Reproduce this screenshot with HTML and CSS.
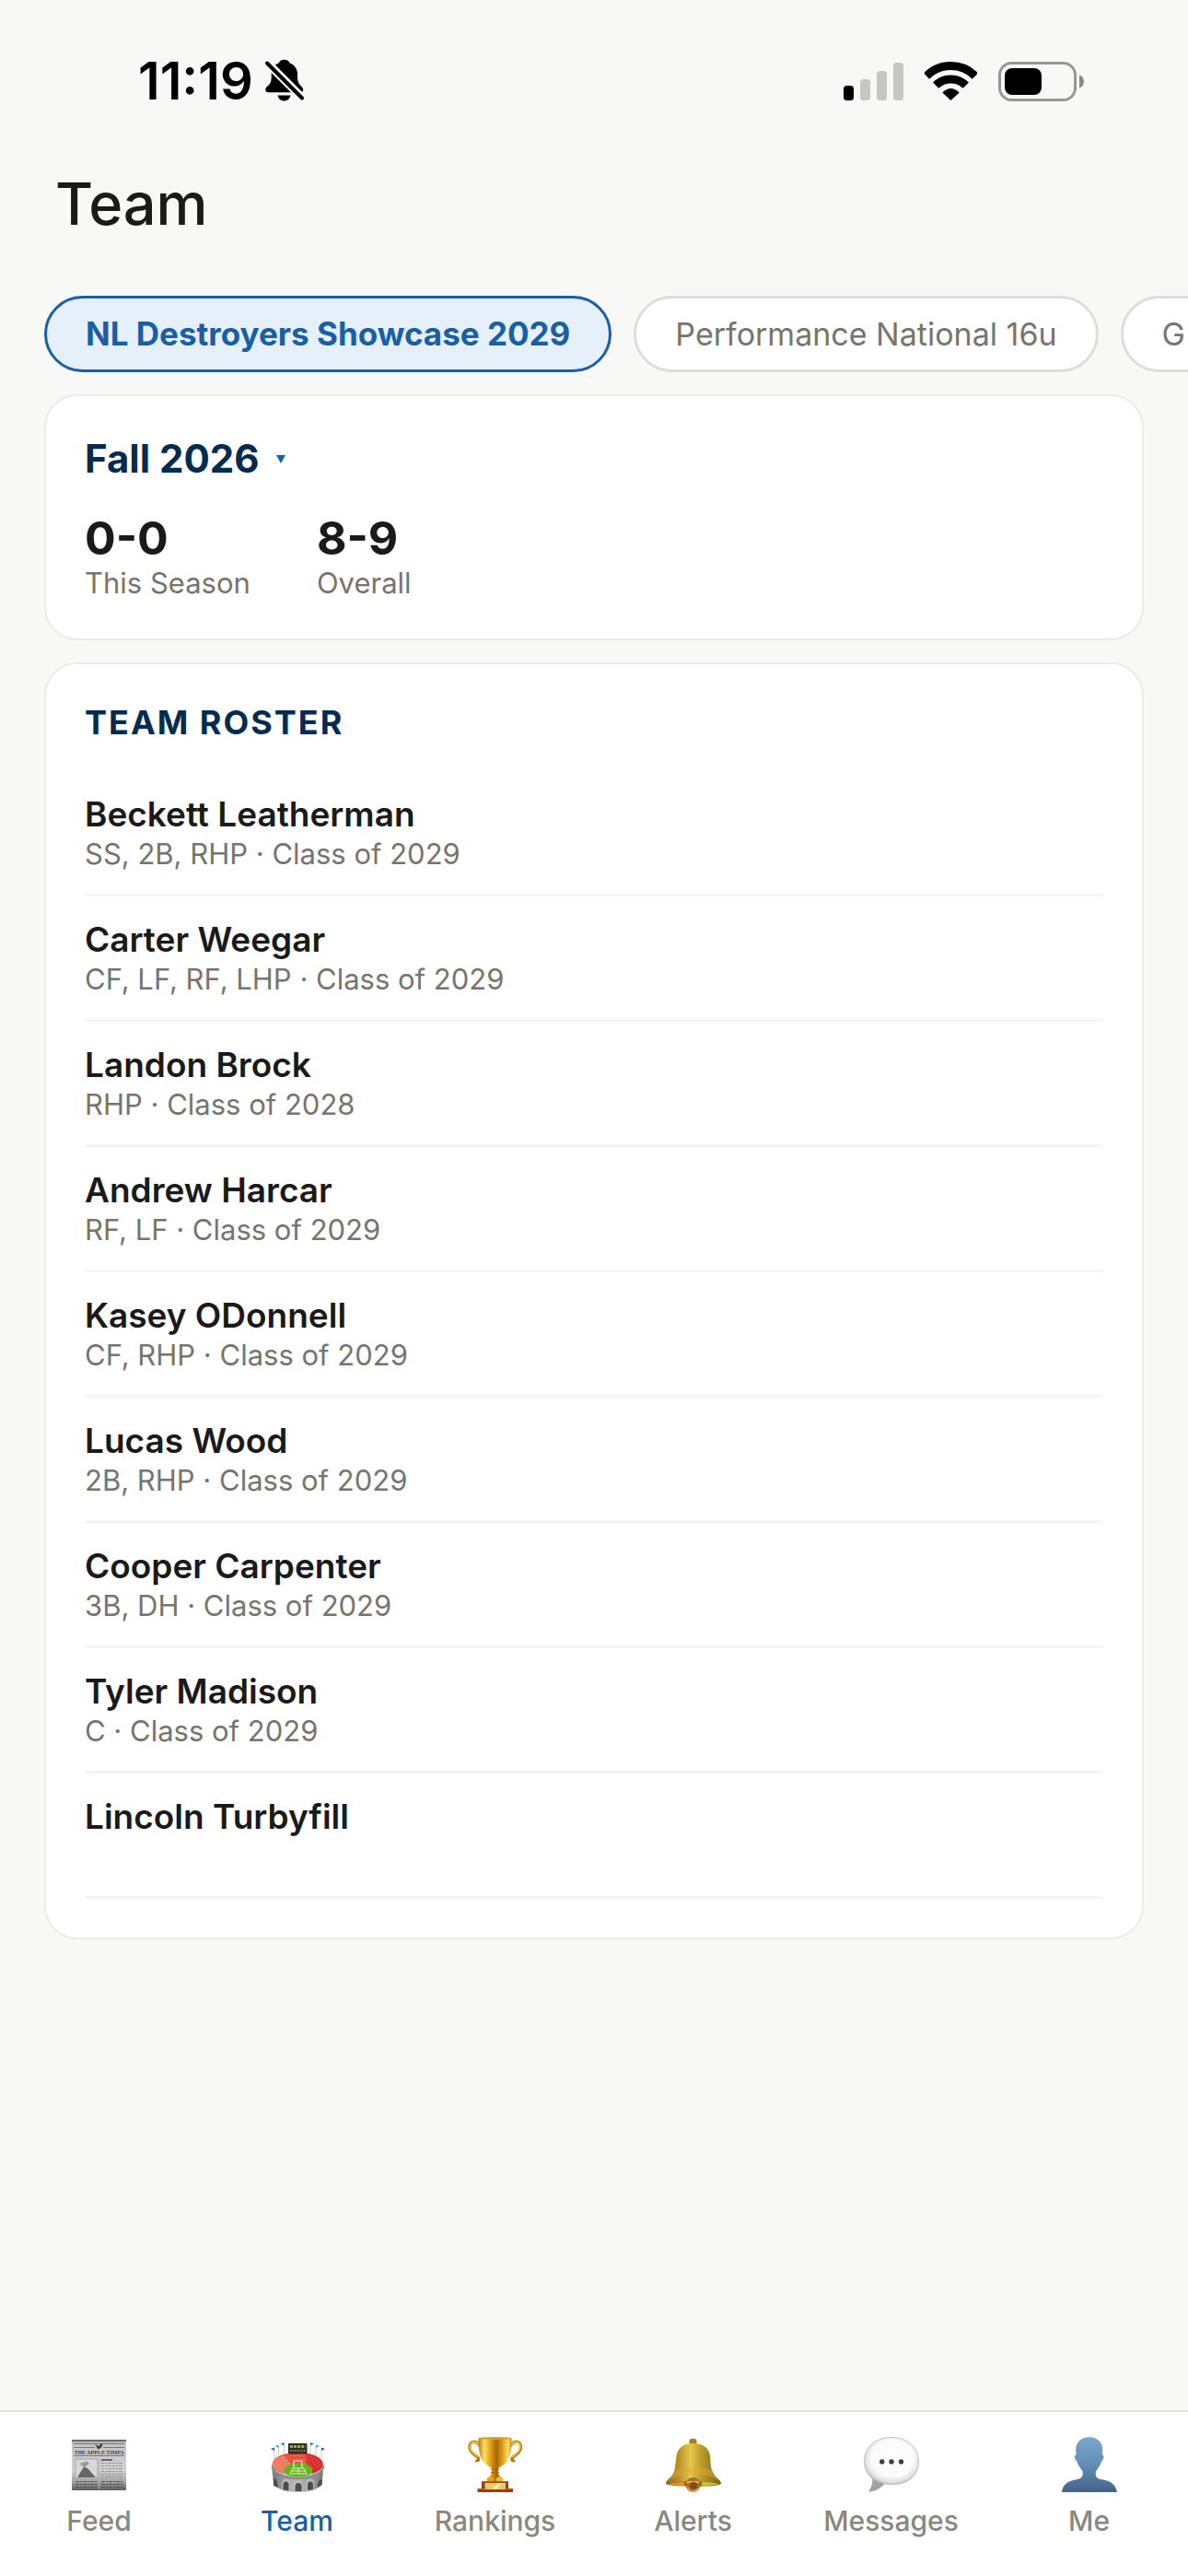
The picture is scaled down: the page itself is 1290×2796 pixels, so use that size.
FILE: index.html
```
<!DOCTYPE html>
<html lang="en">
<head>
    <meta charset="UTF-8">
    <meta name="viewport" content="width=device-width, initial-scale=1.0">
    <title>Team</title>
    <link rel="stylesheet" href="styles.css">
</head>
<body>
    <div class="status-bar">
        <div class="status-left">
            <span class="time">11:19</span>
            <svg width="44" height="48" viewBox="0 0 44 48" aria-hidden="true">
                <path d="M21.7 .7c-3 0-5 1.500-5.800 3.500C10.500 6.500 7.700 11 7.700 16v4c0 5-1.700 7.500-4.200 9.500C1.800 31 1.300 32 1.300 33.500c0 1.700 1 2.800 2.800 2.800H39.500c1.700 0 2.700-1.200 2.700-2.800 0-1.500-.8-2.500-2.200-4-2.500-2.300-4-5-4-9.500v-4c0-5-3-9.500-8.500-11.800C26.700 2.200 24.700.7 21.700.7z"/>
                <path d="M14.500 39.500h14c-.8 3.700-3.500 6-7 6s-6.200-2.300-7-6z"/>
                <path class="slash-gap" d="M1 2L43 44"/>
                <path class="slash" d="M3 4.500L41 42.500"/>
            </svg>
        </div>
        <div class="status-right">
            <svg width="65" height="42" viewBox="0 0 65 42" aria-hidden="true">
                <rect x="0" y="26" width="11" height="16" rx="3.500"/>
                <g fill="#c6c6c4">
                    <rect x="18" y="19" width="11" height="23" rx="3.500"/>
                    <rect x="36" y="10" width="11" height="32" rx="3.500"/>
                    <rect x="54" y="1" width="11" height="41" rx="3.500"/>
                </g>
            </svg>
            <svg width="57" height="42" viewBox="0 0 57 42" aria-hidden="true">
                <g fill="none" stroke="#000" stroke-width="9">
                    <path d="M2 15.500A37.500 37.500 0 0 1 55 15.500"/>
                    <path d="M12.200 25.700A23 23 0 0 1 44.800 25.700"/>
                </g>
                <path d="M28.500 42L19.300 33.500Q28.500 24.500 37.700 33.500z"/>
            </svg>
            <svg width="93" height="43" viewBox="0 0 93 43" aria-hidden="true">
                <rect x="1.500" y="1.500" width="82" height="40" rx="13" fill="none" stroke="#979795" stroke-width="3"/>
                <rect x="7" y="7" width="40" height="29" rx="8"/>
                <path d="M88 14.500c3.300 1 5 3.800 5 7s-1.700 6-5 7z" fill="#8a8a88"/>
            </svg>
        </div>
    </div>

    <header>
        <h1>Team</h1>
    </header>

    <main>
        <div class="team-pills">
            <button class="pill active" type="button">NL Destroyers Showcase 2029</button>
            <button class="pill" type="button">Performance National 16u</button>
            <button class="pill" type="button">G</button>
        </div>

        <section class="card">
            <div class="season">
                <select class="season-select" aria-label="Season">
                    <option>Fall 2026</option>
                </select>
                <span class="caret"></span>
            </div>
            <div class="stats">
                <div>
                    <div class="stat-value">0-0</div>
                    <div class="stat-label">This Season</div>
                </div>
                <div>
                    <div class="stat-value">8-9</div>
                    <div class="stat-label">Overall</div>
                </div>
            </div>
        </section>

        <section class="card">
            <h2>TEAM ROSTER</h2>
            <ul class="roster">
                <li>
                    <div class="name">Beckett Leatherman</div>
                    <div class="detail">SS, 2B, RHP · Class of 2029</div>
                </li>
                <li>
                    <div class="name">Carter Weegar</div>
                    <div class="detail">CF, LF, RF, LHP · Class of 2029</div>
                </li>
                <li>
                    <div class="name">Landon Brock</div>
                    <div class="detail">RHP · Class of 2028</div>
                </li>
                <li>
                    <div class="name">Andrew Harcar</div>
                    <div class="detail">RF, LF · Class of 2029</div>
                </li>
                <li>
                    <div class="name">Kasey ODonnell</div>
                    <div class="detail">CF, RHP · Class of 2029</div>
                </li>
                <li>
                    <div class="name">Lucas Wood</div>
                    <div class="detail">2B, RHP · Class of 2029</div>
                </li>
                <li>
                    <div class="name">Cooper Carpenter</div>
                    <div class="detail">3B, DH · Class of 2029</div>
                </li>
                <li>
                    <div class="name">Tyler Madison</div>
                    <div class="detail">C · Class of 2029</div>
                </li>
                <li>
                    <div class="name">Lincoln Turbyfill</div>
                    <div class="detail"></div>
                </li>
            </ul>
        </section>
    </main>

    <nav class="tab-bar">
        <a href="#feed">
            <!-- newspaper -->
            <svg width="60" height="60" viewBox="0 0 60 60" aria-hidden="true">
                <defs>
                    <linearGradient id="paper" x1="0" y1="0" x2="0" y2="1">
                        <stop offset="0" stop-color="#a8a8a8"/>
                        <stop offset=".1" stop-color="#c4c4c4"/>
                        <stop offset=".6" stop-color="#d2d2d2"/>
                        <stop offset=".82" stop-color="#a5a5a5"/>
                        <stop offset="1" stop-color="#5c5c5c"/>
                    </linearGradient>
                </defs>
                <rect x="0" y="3" width="59" height="55" rx="1" fill="url(#paper)"/>
                <path d="M0 4H59" stroke="#555" stroke-width="1.500"/>
                <path d="M2 7.500H57M2 11.500H25M34 11.500H57M2 20.500H57" stroke="#777" stroke-width="1"/>
                <path d="M25 8l4 2 3-2.500 1.500 1-2 3.500-3 1.500z" fill="#3c3c3c"/>
                <text class="masthead" x="29.500" y="18.700">THE APPLE TIMES</text>
                <rect x="4" y="24" width="24" height="21" fill="#d8d8d8" stroke="#999" stroke-width=".8"/>
                <path d="M6 44l6-10 2-1 3 1 9 10z" fill="#666"/>
                <path d="M8 30c2-3 4-1 6-3 3-1 4 1 5 2-2 2-4 1-4 4h-3c0-3-2-2-4-3z" fill="#999"/>
                <path d="M32 25H44" stroke="#444" stroke-width="1.500"/>
                <path d="M32 28.500H56M32 31.500H56M32 34.500H56M32 37.500H56M32 40.500H56M32 43.500H56" stroke="#999" stroke-width="1" stroke-dasharray="3 1 2 1 4 1"/>
                <path d="M4 48.500H27M32 48.500H56M4 51.500H27M32 51.500H56M4 54.500H27M32 54.500H56" stroke="#555" stroke-width="1.200" stroke-dasharray="4 1 2 1"/>
                <path d="M29.800 23V57" stroke="#b8b8b8" stroke-width=".8"/>
            </svg>
            <span>Feed</span>
        </a>
        <a href="#team" class="current" aria-current="page">
            <!-- stadium -->
            <svg width="60" height="60" viewBox="0 0 60 60" aria-hidden="true">
                <defs>
                    <linearGradient id="wall" x1="0" y1="0" x2="1" y2="0">
                        <stop offset="0" stop-color="#777"/>
                        <stop offset=".4" stop-color="#b4b4b4"/>
                        <stop offset=".7" stop-color="#a5a5a5"/>
                        <stop offset="1" stop-color="#777"/>
                    </linearGradient>
                </defs>
                <path d="M5 24V13M9.500 20V10M15.500 18V7M56 24V13M50 20V10M44 18V7" stroke="#bbb" stroke-width=".8"/>
                <path d="M5 11.500v3.500l-4-2zM56 11.500v3.500l4-2z" fill="#2756b8"/>
                <path d="M9.500 8.500v3.500l-4-2zM50 8.500v3.500l4-2z" fill="#32b5ad"/>
                <path d="M15.500 6v3.500l-4-2zM44 6v3.500l4-2z" fill="#2d7dc4"/>
                <path d="M2 30L4 52C9 57 19 60 31 60S52 57 56.500 52L58.500 30z" fill="url(#wall)"/>
                <ellipse cx="30.300" cy="31" rx="28.300" ry="14" fill="#bdbdbd"/>
                <path d="M3 30C3 22 15 17 30.500 17S57.500 22 57.500 30C57.500 35 50 39 46 39.500C45 32 39 30 31 30S16 33 15 39.500C9 38 3 35 3 30z" fill="#e94c3d"/>
                <path d="M39 18C50 20 57.500 24 57.500 30C57.500 35 50 39 46 39.500C45 35 43 33 40 31z" fill="#df2a2d"/>
                <path d="M15 20l9 11-9 8C8 37 3 35 3 30S8 22 15 20z" fill="#f47960"/>
                <g fill="none" stroke="#ffc2ae" stroke-width="1" stroke-dasharray="1 2.500" opacity=".8">
                    <path d="M6 31C6 24 18 20 30 20S54 24 54 31"/>
                    <path d="M9 34C9 27 19 24 30 24S51 27 51 34"/>
                    <path d="M13 36C14 30 22 27 30 27S46 30 47 36"/>
                </g>
                <ellipse cx="30.700" cy="36" rx="15.500" ry="7.500" fill="#62b81b"/>
                <path d="M22 40l3-6h12l3 6zM24 37h14M31 34v6" fill="none" stroke="#dff2c8" stroke-width="1"/>
                <path d="M26 33v-7h9v7" fill="none" stroke="#ffe3dc" stroke-width="1.200"/>
                <path d="M2.500 32C4 40 17 45 30.500 45S57 40 58.500 32" fill="none" stroke="#8a8a8a" stroke-width="2"/>
                <g fill="#d0d0d0">
                    <path d="M13 59V50a4.500 4.500 0 0 1 9 0V60zM26 60V52a4.800 4.800 0 0 1 9.600 0V60zM39.500 59V50a4.500 4.500 0 0 1 9 0V57z" opacity=".5"/>
                </g>
                <path d="M4 53V45c4 0 4.500 4 4.500 10zM14.500 57.500V52a3 3.500 0 0 1 6 0V58.500zM27.500 59V54a3.500 4 0 0 1 7 0V59zM41 58V52a3 3.500 0 0 1 6 0V57zM52 55c0-6 1-9 5-9l-.5 6z" fill="#4d4d4d"/>
                <rect x="20" y="7" width="20.500" height="11.500" rx="1" fill="#2c2f27"/>
                <path d="M22 10.500H38.500" stroke="#a3a93e" stroke-width="3" stroke-dasharray="3 1"/>
                <path d="M22 15H38.500" stroke="#7f8532" stroke-width="2" stroke-dasharray="1.500 1"/>
            </svg>
            <span>Team</span>
        </a>
        <a href="#rankings">
            <!-- trophy -->
            <svg width="60" height="60" viewBox="0 0 60 60" aria-hidden="true">
                <defs>
                    <linearGradient id="gold" x1="0" y1="0" x2="1" y2="0">
                        <stop offset="0" stop-color="#b87a0c"/>
                        <stop offset=".18" stop-color="#ffdf6b"/>
                        <stop offset=".36" stop-color="#e3a012"/>
                        <stop offset=".55" stop-color="#a76605"/>
                        <stop offset=".8" stop-color="#f3b929"/>
                        <stop offset=".9" stop-color="#ffe27d"/>
                        <stop offset="1" stop-color="#c2850e"/>
                    </linearGradient>
                </defs>
                <g fill="none" stroke-linecap="round">
                    <path d="M12.500 9C9 3.500 2 4.500 2 11c0 6 5 8 8.500 11 2 2 1.500 4-1 4M47 9c3.500-5.500 10.500-4.500 10.500 2 0 6-5 8-8.500 11-2 2-1.500 4 1 4" stroke="#b67a0c" stroke-width="3.200"/>
                    <path d="M12 8.500C9 4 2.500 5 2.500 11c0 5 5 7.500 8 10.500M47.500 8.500C50.500 4 57 5 57 11c0 5-5 7.500-8 10.500" stroke="#ffd75d" stroke-width="1.200"/>
                </g>
                <path d="M11.500 1H47.500C47.500 14 46 23 42 27c-3 4-7 5-9 7 0 4 0 6 2 9l3 2v4H21v-4l3-2c2-3 2-5 2-9-2-2-6-3-9-7C13 23 11.500 14 11.500 1z" fill="url(#gold)"/>
                <ellipse cx="29.500" cy="1.500" rx="18" ry="1.500" fill="#dc9f20"/>
                <path d="M24.500 35H34.500M25 38.500H34" stroke="#a2690a" stroke-width="1"/>
                <ellipse cx="24.500" cy="46" rx="4" ry="2.500" fill="#e0a324"/>
                <ellipse cx="34.500" cy="46" rx="4" ry="2.500" fill="#f0bb3c"/>
                <path d="M15 48H44V56H49V60H10.500V56H15z" fill="#9b3d0b"/>
                <path d="M15 48H44V49.500H15zM10.500 56H49V57.200H10.500z" fill="#c15c1c"/>
                <rect x="18.500" y="50" width="22.500" height="7" fill="#efc56d"/>
                <path d="M26 57l7-7h5l-7 7z" fill="#ffe9a8"/>
            </svg>
            <span>Rankings</span>
        </a>
        <a href="#alerts">
            <!-- bell -->
            <svg width="60" height="60" viewBox="0 0 60 60" aria-hidden="true">
                <defs>
                    <linearGradient id="brass" x1="0" y1="0" x2="1" y2="0">
                        <stop offset="0" stop-color="#8b6a14"/>
                        <stop offset=".25" stop-color="#c0942a"/>
                        <stop offset=".45" stop-color="#e6cb48"/>
                        <stop offset=".62" stop-color="#c0a02c"/>
                        <stop offset=".85" stop-color="#947920"/>
                        <stop offset="1" stop-color="#7d6416"/>
                    </linearGradient>
                </defs>
                <rect x="25.500" y="2" width="8" height="7" rx="2.500" fill="#a57f1c"/>
                <path d="M0 51C0 46 7 45 9.500 36C11 28 10.500 25 12 18C14.500 10 22 7 29.500 7S45 10 47.500 18C49 25 48 30 50 36C53 45 60 46 60 51C55 55 5 55 0 51z" fill="url(#brass)"/>
                <path d="M10 36C20 32 39 32 50 36C52 41 55 44 57 47C42 39 18 39 3 47C6 44 9 41 10 36z" fill="#e0a934" opacity=".45"/>
                <path d="M1 51C12 47 48 47 59 51C50 54 10 54 1 51z" fill="#8e6414"/>
                <path d="M3 51C8 49.500 14 49 20 48.500V53C14 53 7 52.500 3 51z" fill="#d59537"/>
                <path d="M39 48.500C46 49 52 49.500 57 51C51 52.500 45 53 39 53z" fill="#cfc02e"/>
                <circle cx="29.500" cy="52" r="8" fill="#a8712a"/>
                <path d="M22 50H37a8 8 0 0 0-1.500-2H23.500z" fill="#f2a94e"/>
                <circle cx="30" cy="53" r="4" fill="#7c4c1a"/>
                <path d="M23.500 55a7 7 0 0 0 12 1" fill="none" stroke="#dca75d" stroke-width="1.500"/>
            </svg>
            <span>Alerts</span>
        </a>
        <a href="#messages">
            <!-- speech bubble -->
            <svg width="60" height="60" viewBox="0 0 60 60" aria-hidden="true">
                <defs>
                    <radialGradient id="bubble" cx=".52" cy=".45" r=".58">
                        <stop offset="0" stop-color="#fff"/>
                        <stop offset=".68" stop-color="#fafafa"/>
                        <stop offset=".88" stop-color="#dedede"/>
                        <stop offset="1" stop-color="#adadad"/>
                    </radialGradient>
                </defs>
                <path d="M9 44c1 6-.5 10-4 15.500C12 60 18 56 22.500 51z" fill="#a2a2a2"/>
                <path d="M30 .5C48 .5 59.500 12 59.500 27S48 51.500 31 51.500C12 51.500 .5 41 .5 26.500S12 .5 30 .5z" fill="url(#bubble)" stroke="#b5b5b5" stroke-width=".8"/>
                <g fill="#3c3c3c">
                    <circle cx="19.700" cy="27" r="2.700"/>
                    <circle cx="30" cy="27" r="2.700"/>
                    <circle cx="40.500" cy="27" r="2.700"/>
                </g>
            </svg>
            <span>Messages</span>
        </a>
        <a href="#me">
            <!-- silhouette -->
            <svg width="60" height="60" viewBox="0 0 60 60" aria-hidden="true">
                <defs>
                    <linearGradient id="bust" x1="0" y1="0" x2="0" y2="1">
                        <stop offset="0" stop-color="#7ba7cb"/>
                        <stop offset=".45" stop-color="#6690b8"/>
                        <stop offset="1" stop-color="#446389"/>
                    </linearGradient>
                </defs>
                <path d="M29.700 .3C38.500 .3 44.200 6 44.200 14C44.200 16.500 44 18 44 19.500C46.500 20 45.500 25 43.200 26.500C41.500 31.500 39 34.500 36.800 37.500C36.500 42 37 44.500 42 46C49 47.500 58 48.500 60 60H0C1.500 48.500 10.500 47.500 17.500 46C22.500 44.500 23 42 22.700 37.500C20.500 34.500 18 31.500 16.300 26.500C14 25 13 20 15.500 19.500C15.500 18 15.200 16.500 15.200 14C15.200 6 21 .3 29.700 .3z" fill="url(#bust)"/>
            </svg>
            <span>Me</span>
        </a>
    </nav>
</body>
</html>
```
FILE: styles.css
```
* {
    margin: 0;
    padding: 0;
    box-sizing: border-box;
}

body {
    min-height: 100vh;
    display: flex;
    flex-direction: column;
    background: #f8f8f6;
    color: #1a1a1a;
    font-family: Inter, "Liberation Sans", sans-serif;
    overflow-x: hidden;
}

button, select {
    font-family: inherit;
    cursor: pointer;
}

/* status bar */
.status-bar {
    display: flex;
    align-items: center;
    justify-content: space-between;
    height: 176px;
    padding: 0 113px 0 150px;
    color: #000;
}

.status-left {
    display: flex;
    align-items: center;
    gap: 12px;
}

.status-right {
    display: flex;
    align-items: center;
    gap: 23px;
}

.time {
    font-size: 56px;
    font-weight: 600;
}

.slash-gap {
    stroke: #f8f8f6;
    stroke-width: 9;
}

.slash {
    stroke: #000;
    stroke-width: 4;
    stroke-linecap: round;
}

/* title */
header {
    padding: 5px 60px 60px;
}

h1 {
    font-size: 63px;
    line-height: 80px;
    font-weight: 500;
}

main {
    flex: 1;
    display: flex;
    flex-direction: column;
    gap: 24px;
    padding: 0 48px 48px;
}

/* team picker, scrolls off to the right */
.team-pills {
    display: flex;
    gap: 24px;
    margin-right: -48px;
    overflow: hidden;
}

.pill {
    flex: none;
    padding: 18px 42px;
    border: 3px solid #dddddd;
    border-radius: 42px;
    background: #fff;
    color: #75756d;
    font-size: 34px;
    line-height: 41px;
}

.pill.active {
    border-color: #185fa5;
    background: #e6f0fa;
    color: #185fa5;
    font-size: 35px;
    font-weight: 700;
}

.card {
    padding: 42px;
    border: 2px solid #ebebea;
    border-radius: 36px;
    background: #fff;
}

.season {
    display: flex;
    align-items: center;
    gap: 18px;
    margin-bottom: 30px;
}

.season-select {
    appearance: none;
    border: none;
    background: none;
    color: #042c53;
    font-size: 42px;
    line-height: 52px;
    font-weight: 700;
}

.caret {
    border: 5px solid transparent;
    border-top: 9px solid #185fa5;
    border-bottom: none;
}

.stats {
    display: flex;
    gap: 72px;
}

.stat-value {
    font-size: 50px;
    line-height: 60px;
    font-weight: 700;
}

.stat-label {
    color: #75756d;
    font-size: 31px;
    line-height: 37px;
}

h2 {
    margin-bottom: 32px;
    color: #042c53;
    font-size: 36px;
    line-height: 42px;
    font-weight: 700;
    letter-spacing: 2px;
}

.roster {
    list-style: none;
}

.roster li {
    padding: 24px 0 23px;
    border-bottom: 3px solid #f5f5f5;
}

.name {
    font-size: 37px;
    line-height: 46px;
    font-weight: 600;
}

.detail {
    min-height: 40px;
    color: #75756d;
    font-size: 31px;
    line-height: 40px;
}

/* bottom tabs */
.tab-bar {
    display: grid;
    grid-template-columns: repeat(6, 1fr);
    padding: 27px 0 41px;
    border-top: 2px solid #e5e5e4;
    background: #fff;
}

.tab-bar a {
    display: flex;
    flex-direction: column;
    align-items: center;
    gap: 12px;
    color: #888880;
    font-size: 30px;
    line-height: 38px;
    font-weight: 500;
    text-decoration: none;
}

.tab-bar a.current {
    color: #185fa5;
}

.masthead {
    fill: #444;
    font-family: "Liberation Serif", serif;
    font-size: 6px;
    font-weight: 700;
    text-anchor: middle;
}
```
